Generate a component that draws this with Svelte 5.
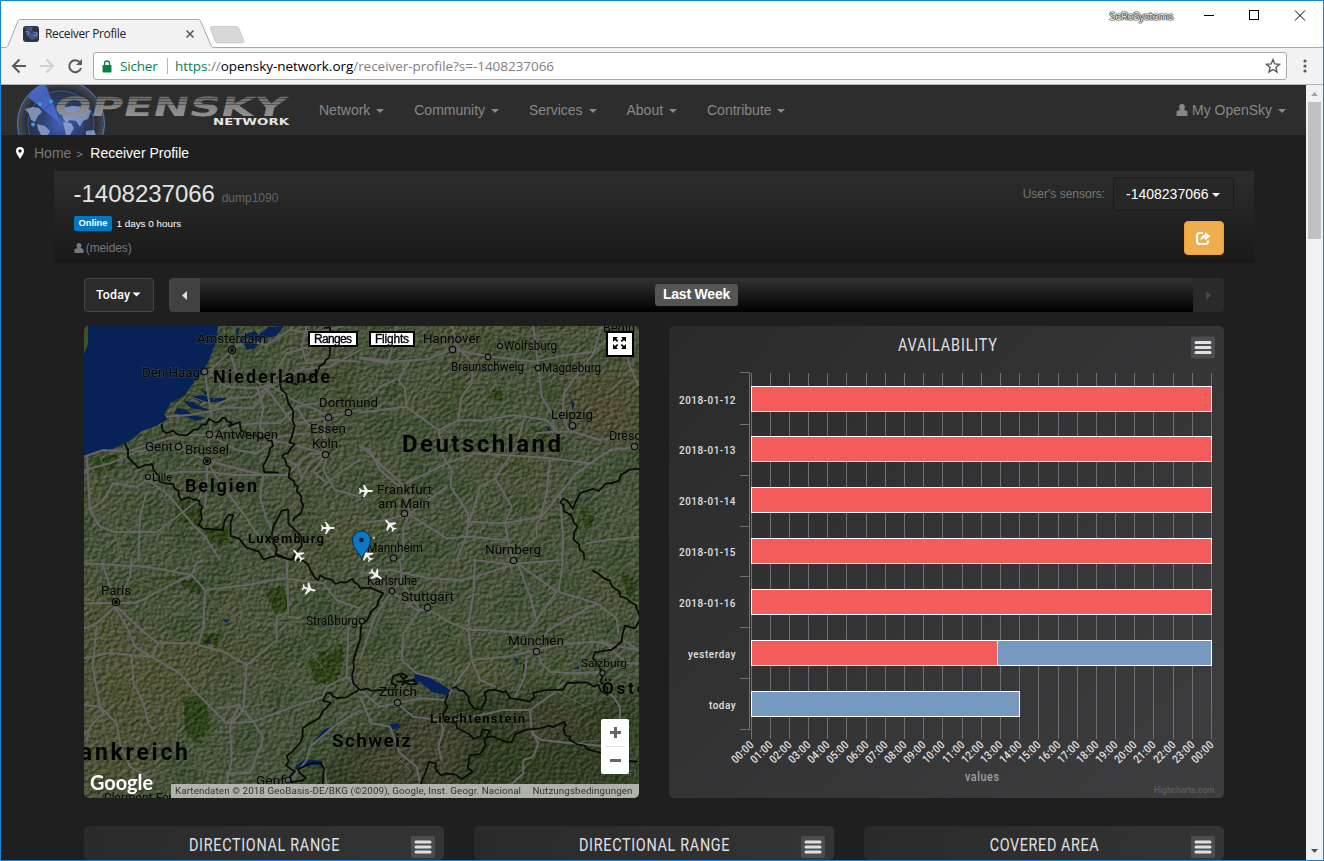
<script>
  const menus = ['Network', 'Community', 'Services', 'About', 'Contribute'];
  const days = [
    { label: '2018-01-12', w: 56, y: 386.5, parts: [[751.5, 1211.5, 0]] },
    { label: '2018-01-13', w: 56, y: 436.5, parts: [[751.5, 1211.5, 0]] },
    { label: '2018-01-14', w: 56, y: 487.5, parts: [[751.5, 1211.5, 0]] },
    { label: '2018-01-15', w: 56, y: 538.5, parts: [[751.5, 1211.5, 0]] },
    { label: '2018-01-16', w: 56, y: 589.5, parts: [[751.5, 1211.5, 0]] },
    { label: 'yesterday', w: 47, y: 640.5, parts: [[751.5, 997.5, 0], [997.5, 1211.5, 1]] },
    { label: 'today', w: 26, y: 691.5, parts: [[751.5, 1019.5, 1]] }
  ];
  const ticks = [372.5, 424.5, 475.5, 526.5, 576.5, 627.5, 678.5, 729.5];
  const hours = Array.from({ length: 25 }, (_, i) => ({
    x: Math.floor(751 + i * 19.19) + 0.5,
    t: String(i % 24).padStart(2, '0') + ':00'
  }));
  const lower = [
    { title: 'DIRECTIONAL RANGE', w: 150 },
    { title: 'DIRECTIONAL RANGE', w: 150 },
    { title: 'COVERED AREA', w: 108.5 }
  ];

  // label, x, y (baseline), width, font size, weight
  const cities = [
    ['Amsterdam', 197, 343, 69, 13, 400], ['Den Haag', 142, 377, 58, 13, 400],
    ['Antwerpen', 215, 439, 63, 12.5, 400], ['Gent', 145, 451, 28, 12.5, 400],
    ['Brüssel', 185, 454, 44, 13, 400], ['Lille', 152, 481, 20, 11.5, 400],
    ['Dortmund', 319, 407, 59, 13, 400], ['Essen', 310, 433, 36, 13, 400],
    ['Köln', 312, 448, 26, 13, 400], ['Hannover', 423, 343, 57, 13, 400],
    ['Wolfsburg', 504, 350, 53, 12, 400], ['Braunschweig', 451, 371, 73, 12, 400],
    ['Magdeburg', 542, 372, 59, 12, 400], ['Berlin', 603, 332, 32, 13, 400],
    ['Leipzig', 551, 419, 42, 13, 400], ['Dresden', 609, 440, 46, 13, 400],
    ['Frankfurt', 377, 494, 55, 13, 400], ['am Main', 378, 508, 52, 13, 400],
    ['Mannheim', 367, 552, 56, 12, 400], ['Nürnberg', 485, 554, 56, 13, 400],
    ['Paris', 101, 595, 30, 13, 400], ['Straßburg', 306, 625, 52, 12, 400],
    ['Karlsruhe', 367, 585, 50, 12, 400], ['Stuttgart', 401, 601, 53, 13, 400],
    ['München', 508, 645, 56, 13, 400], ['Salzburg', 581, 667, 46, 11.5, 400],
    ['Zürich', 379, 696, 38, 13, 400], ['Genf', 256, 785, 29, 12.5, 400],
    ['Clermont-Ferrand', 104, 802, 92, 12, 400], ['Lyon', 216, 802, 28, 12, 400],
    ['Niederlande', 213, 383, 117, 18, 700], ['Belgien', 185, 492, 72, 18, 700],
    ['Luxemburg', 248, 543, 76, 13, 700], ['Deutschland', 402, 452, 159, 24, 700],
    ['Liechtenstein', 430, 723, 95, 13, 700], ['Schweiz', 332, 747, 79, 19, 700],
    ['Frankreich', 54, 760, 134, 23, 700], ['Österreich', 602, 694, 105, 17, 700]
  ];
  const dots = [
    [204.5, 371.5], [209.5, 434.5], [178.5, 446.5], [148, 477, 2.5], [348.5, 412.5], [328.5, 417.5],
    [325.5, 454.5], [452.5, 349.5], [500, 346, 2.5], [488, 357, 2.8], [538, 368, 2.8],
    [572.5, 425.5], [634.5, 446.5], [404.5, 513.5], [393.5, 558], [513.5, 560.5], [362, 621, 2.6],
    [392, 591, 2.8], [427.5, 607.5], [536.5, 651.5], [602.5, 673, 2.6], [397.5, 702.5], [288, 780, 2.8]
  ];
  const capitals = [[232, 350], [207, 461], [116, 602]];
  const planes = [
    [366, 491, 0], [328, 528, 0], [390, 525, -130], [298, 555, -130],
    [309, 589, 15], [376, 575, 35], [367, 555, -125]
  ];

  // Roads, one list per map tile; tile units are thirds of a pixel
  const tiles = [
    {
      x: 80, y: 320,
      main: [
        'M392 150 450 95 500 60 560 75 630 30 700 40 790 18', 'M450 95 470 160 540 190 600 180 660 150 750 140 840 90',
        'M375 160 385 230 395 290 388 345 380 420 382 480 375 560', 'M390 160 440 200 530 205 570 195 640 240 700 265 745 290 840 270',
        'M260 290 330 285 380 275 440 262 520 265 570 200 590 150 620 100 690 80', 'M385 265 450 235 520 230 560 205 600 260 640 310 735 295',
        'M400 345 450 320 520 310 600 310 650 260 730 245', 'M12 410 70 390 140 395 200 375 300 345 388 345 470 390 530 400 600 350 680 340',
        'M12 450 90 430 170 395 280 375 380 420 450 440 550 465 620 465 690 400 740 405', 'M380 420 420 490 490 580 530 640 590 715',
        'M20 410 30 570 60 620 100 635 230 637 290 590 355 540 380 480', 'M30 570 70 540 100 490 170 500 215 470 300 455 380 455 460 465 550 465',
        'M200 515 180 590 175 720', 'M205 480 265 525 340 615 375 650 420 720', 'M735 300 730 350 740 410 730 450 765 510 840 530',
        'M650 260 680 310 735 345 735 400 690 430 665 475 655 440 620 420', 'M550 465 540 530 560 600 590 650 620 690',
        'M740 400 700 455 740 490 790 450 840 420', 'M680 18 665 80 680 130 760 120 840 125', 'M530 200 550 260 540 320 570 360 640 375 735 400'
      ],
      minor: [
        'M12 560 80 600 130 700', 'M60 410 85 470 160 510', 'M300 345 320 400 300 455', 'M450 440 440 500 470 540',
        'M265 525 330 490 400 490', 'M330 230 390 250 460 290', 'M420 160 430 200 400 240', 'M470 160 520 250 580 260',
        'M700 160 760 210 840 190', 'M400 390 480 350 540 420 600 440', 'M120 640 110 720', 'M660 540 700 620 760 670', 'M700 18 740 80 800 70'
      ],
      borders: [
        'M732 24l18-2 2 50-4 40-12 10-4 10-14 7-6 20-20 16-20 8-14 2-8 8-20-5-18-5-12 4 4 22 14 12 8 32 14 20-2 30 6 14-10 38-6 12 16 6-14 16-6 10-10 2-8 8 10 10 4 18 10 6-4 30 16 10 2 12 10 4-4 14 14 16-2 12 8 16-8 24-18 12-6 10',
        'M245 312l2 18 12 10 20-8 14 12 28 2 22-18 12 0 10-14 14 0 8-18 20 12 12-4 8-10 8 0 6 10 14 4-8 12 12-6 20-8 4 28 12 0 12 12 24 0 10 10 14-6 10 12 10 0 4 16-8 6-6 24-8 16-8 14 4 18 44 2',
        'M134 370l10 20 0 22 14 14 18 18 18-8 14-2 8-2 6 20 14 16 0 16 22 6 22 2 4 14 12 6 0 16 8 12 20-8 22 8 12 2 0 12 8 4-4 18 4 20-10 18 14 12 58 4 6-28 12-18 14 2-8 20 0 42 26 8 20 26 24 8 14 4 14 24 22-6 16-4',
        'M625 568l-20 4-12 24-12 20-6 30 4 20 12 20-4 18 12 6 36 10 18-28 12-14 0-26-20-22-20-20 0-42', 'M590 702 620 716 665 720'
      ]
    },
    {
      x: 360, y: 320,
      main: [
        'M0 112 100 125 200 118 278 88 380 108 520 125 620 105 700 95 740 60', 'M150 120 115 180 135 205 138 260 100 265 0 278',
        'M105 180 60 200 35 225', 'M278 18 290 80 340 130 335 190 305 230 295 300 370 302 460 285 560 300 590 335 637 335',
        'M520 18 535 140 545 230 580 290 582 335 530 340', 'M725 18 700 100 640 180 612 220 608 290 625 330', 'M785 45 810 140 835 195',
        'M138 260 180 290 235 330 300 300', 'M235 330 250 410 275 450 272 500 325 580 322 640 290 720', 'M0 375 80 450 130 495 200 460 260 430 340 400 480 408 570 415 690 430 750 390 835 380',
        'M490 300 470 380 405 475 455 560 435 610 320 605', 'M570 415 560 520 540 590 435 610 450 690 460 720',
        'M405 475 360 500 330 600', 'M690 430 650 460 600 520 530 610 530 650 470 700', 'M637 335 720 360 835 340',
        'M130 495 150 580 130 620 130 720', 'M0 610 80 600 150 580 260 500', 'M150 585 260 655 325 650 440 660', 'M600 520 610 670 605 720', 'M680 670 740 660 835 650',
        'M115 0 85 130 0 115', 'M130 510 60 450 30 390 0 380'
      ],
      minor: [
        'M380 110 400 190 490 215', 'M440 420 450 360 500 390', 'M545 150 620 170 700 150', 'M150 120 200 60 180 18',
        'M650 360 680 420 630 480', 'M700 520 760 500 810 525', 'M0 520 60 570 80 610', 'M400 18 500 50 640 35', 'M680 580 750 600 835 580'
      ],
      borders: ['M837 447l-32 2-10 10-12 4-6 20-20 6-20 2-20 22-18-6-38 12-16 30-6 18-18-26-12-4-8 10 10 10 0 16 24 14 6 20 12 12-10 18-2 22 16 14 2 16 12 10 2 20']
    },
    {
      x: 80, y: 560,
      main: [
        'M12 130 170 128 280 70 335 45 375 90 500 75 610 55 730 70 770 120 840 145', 'M12 10 100 15 200 20 335 45 350 10 370 0',
        'M375 90 370 200 355 255 430 275 500 315 490 445 450 500 455 600 440 672', 'M105 140 145 210 165 260 215 290 300 340 350 400 440 490 520 485 550 535 510 640 440 640',
        'M110 140 190 215 235 250 355 250', 'M235 250 215 290 155 285 90 278 12 295', 'M50 200 38 320 60 440 110 490 120 550 150 620 200 650',
        'M105 140 50 190 12 205', 'M155 285 160 370 190 430 205 490 220 510', 'M12 435 60 440 70 460 30 500 20 540', 'M500 315 590 240 590 170 625 155 620 0',
        'M520 485 640 440 730 410 740 380 800 350 805 200 840 145', 'M65 0 80 50 110 125', 'M155 0 150 50 120 120', 'M800 350 838 390', 'M625 170 660 175', 'M415 445 440 442 475 435 520 485', 'M480 435 450 490',
        'M625 670 680 600 690 560 760 500 840 450', 'M730 610 740 672'
      ],
      minor: [
        'M375 90 420 150 540 190 680 185', 'M500 315 625 375 730 380', 'M120 480 200 470', 'M625 375 600 440', 'M12 330 60 320 140 330', 'M640 190 690 270 740 340',
        'M200 650 300 620 440 640', 'M60 440 90 600', 'M150 50 240 90 335 45', 'M690 490 760 450'
      ],
      borders: [
        'M665 0l18 12 8 18 14 24 10 6 6-14 12 8 24 6 10 12 16-6 14 2 20-12 8 12 8 4 7 12',
        'M840 240l-14 40-6 24 2 20-6 22 4 24 18 18-38 24-30 2-12-6-6-10-12 2-12 22 24 6-10 12-14 14-10 20-28 16-22 14 0 26-6 16-26 30-16 12 6 16-8 12 14 10 12 8-14 16 4 16 30-4 14-8-18-14-6-12 38-18 30-2 10 16-4 48'
      ]
    },
    {
      x: 360, y: 560,
      main: [
        'M0 40 90 30 205 55 300 60 345 50 440 20 480 10 610 0', 'M120 0 125 60 90 100 45 170 20 240 0 300', 'M95 95 170 150 210 150 265 185 325 210 380 210 500 220 530 180 510 110 475 15 340 0',
        'M120 60 180 150 130 220 125 300 170 340 250 360', 'M345 0 340 100 325 200 335 300 360 360 405 380', 'M335 300 440 290 530 270 545 310 570 335 640 340 725 335',
        'M530 270 590 255 700 245 835 270', 'M480 15 590 95 530 180', 'M610 0 595 95 710 130 770 175 775 220', 'M710 130 600 190 560 215 530 270', 'M500 290 495 350 465 410',
        'M330 310 280 380 265 410', 'M0 390 60 440 110 430 180 415 260 420', 'M110 430 160 470 240 480 250 510 235 560 245 600', 'M0 410 35 490 90 500 120 580 170 620 180 672',
        'M270 480 340 470 430 450 510 450 580 400 610 370', 'M510 450 515 510 535 550 520 590 490 600 490 640 455 672', 'M730 390 760 410 780 440 780 480', 'M515 520 545 540 640 550 750 560', 'M725 240 800 310 835 310', 'M835 270 790 240'
      ],
      minor: [
        'M230 0 220 60 190 120', 'M210 150 260 220 330 240', 'M45 180 90 250 130 280', 'M265 185 290 120 345 90', 'M40 600 110 590 150 630',
        'M600 400 680 440 730 400', 'M620 550 720 540', 'M380 210 420 280 440 290', 'M60 540 10 560'
      ],
      borders: [
        'M0 85l30-2 40 17-14 20-4 18-18 16-12 26-18 14-4 46', 'M0 390l24-4 10 6 40-2 30-2 4-12-14-8 6-20 26-8 16 10-12 6-8-8 14 16 22-4 14 10-20 4-16-6-10 6 8-8-26-2',
        'M265 402l-10 24 8 16-14 20 4 20 36 8 2 14 36 18 14 14 22-8 4-20 22 4-16 30 4 14-16 26-32 4-6 38 14 10-32 24-18-14-26-4-18 6-16-18 0-18-20-4-10 30-16 38',
        'M275 385l14-4 8 10 14 2 14 16 2 16 14 20 22 4 16-32-6-20 14-6 16-2 26 8 8-4 14 22 32 4 26 6 14-14-4-12 34-8 56-2 12-20 60-2 20 12 14-4 8 18 20 12-2-22-20-18 8-20-14-30-16-20 6-18 50-8 30-24 2-20 8-28 30 8 8-14 8-16-14-40-18-10-10-10-18-6-4-16-20-12-8-20-14-4-20-16-18-10',
        'M370 535l26-6 34 14 24 4 12-24 34-14 40-4 26-8 14 4 32-16 6 10-8 10 6 20 14 6-2 8 24 14 22 4 12 12 22 6 36 8 60 20 30 2'
      ]
    }
  ];
</script>

{#snippet caret()}<span class="caret"></span>{/snippet}

{#snippet person(size)}
  <svg class="person" width={size} height={size} viewBox="0 0 11 12">
    <path d="M5.500 0C3.500 0 2.600 1.200 2.600 3.100c0 1.200.4 2.200 1 2.900L1.600 6.600C.6 7 0 7.600 0 8.600v2.500c0 .6.300.9.900.9h9.200c.6 0 .9-.3.900-.9V8.600c0-1-.6-1.600-1.600-2L7.400 6c.6-.7 1-1.700 1-2.900C8.400 1.200 7.500 0 5.500 0z" fill="currentColor" />
  </svg>
{/snippet}

{#snippet burger(x, y)}
  <rect x={x} y={y} width="24" height="22" rx="2" fill="#4d4d4f" />
  <path d="M{x + 5} {y + 6}h14M{x + 5} {y + 11}h14M{x + 5} {y + 16}h14" stroke="#e0e0e3" stroke-width="3" stroke-linecap="round" />
{/snippet}

{#snippet narrow(x, y, size, w, fill, label, k = 0.8)}
  <text transform="translate({x} {y}) scale({k} 1)" class="cond" class:small={size < 14} font-size={size} {fill} textLength={w / k} lengthAdjust="spacing">{label}</text>
{/snippet}

<div class="window">
  <div class="tabs">
    <svg class="tabshape" width="260" height="47" viewBox="1 1 260 47">
      <path d="M1 47.500H5.500C7 47.500 7.500 46.500 8 45.500L18 21C18.600 19.800 19 19.500 20.500 19.500H198C199.500 19.500 200 20 200.600 21.200L211 45.500C211.600 47 212 47.500 213.500 47.500H261V49H1z" fill="#f2f2f2" stroke="#a9a9a9" />
      <path d="M212 26.500h24c1.500 0 2.200.5 2.800 1.800l4.800 12c.6 1.600.2 2.700-1.500 2.700h-24c-1.500 0-2.200-.5-2.800-1.800l-4.800-12c-.6-1.600-.2-2.700 1.500-2.700z" fill="#d8d8d8" stroke="#c4c4c4" stroke-width=".8" />
      <rect x="23" y="26" width="16" height="16" rx="3" fill="#30343d" />
      <path d="M24.500 28l7.500 5 .5-6-5-.5zM25 31h6l3 3 4-2v5l-6 3-5-4z" fill="#3f5690" />
      <path d="M26 31l3 1-1 3M33 32l4 1-1 3-3-1" stroke="#7489b8" fill="none" />
      <path d="M186.500 30.500l7 7m0-7l-7 7" stroke="#5a5a5a" stroke-width="1.600" />
    </svg>
    <span class="tabtitle">Receiver Profile</span>
    <span class="owner">SeRoSystems</span>
    <svg class="winbtns" width="110" height="26" viewBox="1200 2 110 26" fill="none" stroke="#000">
      <path d="M1204 15.500h10M1295 10.500l10 10m0-10l-10 10" />
      <rect x="1249.500" y="10.500" width="9" height="9" />
    </svg>
  </div>
  <div class="toolbar">
    <svg width="80" height="36" viewBox="4 48 80 36" fill="none" stroke-width="2">
      <path d="M26 66H13m6.500-6.500L13 66l6.500 6.500" stroke="#5a5a5a" />
      <path d="M40 66h13m-6.500-6.500L53 66l-6.500 6.500" stroke="#d0d0d0" />
      <path d="M80 62.500A6 6 0 1 0 81 68" stroke="#5a5a5a" /><path d="M82 59v6h-6z" fill="#5a5a5a" />
    </svg>
    <div class="omnibox">
      <svg width="10" height="13" viewBox="0 0 10 13"><rect x=".5" y="5" width="9" height="7.500" rx="1" fill="#0b8043" /><path d="M2.500 5.500V3.500a2.500 2.500 0 0 1 5 0v2" fill="none" stroke="#0b8043" stroke-width="1.300" /></svg>
      <span class="secure">Sicher</span><span class="sep"></span>
      <span class="url"><i class="g">https</i><i class="s">://</i><i class="k">opensky-network.org</i><i class="s">/receiver-profile?s=-1408237066</i></span>
      <svg class="star" width="16" height="16" viewBox="0 0 16 16"><path d="M8 1.500l1.800 4.400 4.700.4-3.600 3.100 1.100 4.600L8 11.500 4 14l1.100-4.600L1.500 6.300l4.700-.4z" fill="none" stroke="#5a5a5a" stroke-width="1.400" /></svg>
    </div>
    <svg class="dots" width="4" height="14" viewBox="0 0 4 14" fill="#5a5a5a"><circle cx="2" cy="2" r="1.600" /><circle cx="2" cy="7" r="1.600" /><circle cx="2" cy="12" r="1.600" /></svg>
  </div>

  <div class="viewport">
    <main>
      <nav>
        <svg class="logo" width="282" height="50" viewBox="12 85 282 50">
          <defs>
            <radialGradient id="globe"><stop offset="0" stop-color="#4562bf" /><stop offset=".45" stop-color="#2f3f70" /><stop offset=".8" stop-color="#2a303b" /><stop offset="1" stop-color="#484b50" /></radialGradient>
            <linearGradient id="silver" x1="0" y1="0" x2="0" y2="1"><stop offset="0" stop-color="#5a5a5a" /><stop offset=".5" stop-color="#858585" /><stop offset="1" stop-color="#9a9a9a" /></linearGradient>
          </defs>
          <circle cx="61" cy="123.500" r="43.500" fill="url(#globe)" stroke="#4d7fc8" />
          <path d="M61 124L28 97Q35 86 45 83z" fill="#4b6bd0" opacity=".85" />
          <circle cx="61" cy="124" r="33" fill="none" stroke="#3a62aa" stroke-width=".8" />
          <circle cx="61" cy="124" r="22" fill="none" stroke="#2e4f90" stroke-width=".8" />
          <path d="M25 109l8-2 6 1 3 4-4 4-3 6-4-2-2-6zM37 124l8 2 5 5-2 4h-7l-3-6zM62 108l10-2 14 1 5 4-3 8-5 2-3 6-4-6-6-1-4 3-3-5zM63 122l8 1 3 5-4 7h-4zM86 131l8-1 2 5H86z" fill="#a3b4de" opacity=".7" />
          <circle cx="40" cy="104" r="2" fill="#3d97e8" /><circle cx="51" cy="101.500" r="2" fill="#3d97e8" /><circle cx="33" cy="124.500" r="2" fill="#3d97e8" />
          <g transform="skewX(-13)">
            <text x="79" y="116" class="logotext" font-size="26.500" textLength="232" lengthAdjust="spacingAndGlyphs" fill="url(#silver)">OPENSKY</text>
          </g>
          <path d="M56 98.500h233M56 101.500h233M56 104.500h233" stroke="#2d2d2d" stroke-width=".8" opacity=".6" />
          <text x="213" y="125" class="logotext" font-size="9.500" textLength="76" lengthAdjust="spacingAndGlyphs" fill="#e6e6e6">NETWORK</text>
        </svg>
        {#each menus as m}<a>{m} {@render caret()}</a>{/each}
        <a class="me">{@render person(12)} My OpenSky {@render caret()}</a>
      </nav>

      <div class="crumbs">
        <svg width="8" height="12" viewBox="0 0 8 12"><path d="M4 0a4 4 0 0 0-4 4c0 1.500.6 2.300 1.200 3.500L4 12l2.800-4.500C7.400 6.300 8 5.500 8 4a4 4 0 0 0-4-4zm0 2.300a1.700 1.700 0 1 1 0 3.400 1.700 1.700 0 0 1 0-3.400z" fill="#fff" fill-rule="evenodd" /></svg>
        <span class="home">Home</span><span class="gt">&gt;</span><span class="here">Receiver Profile</span>
      </div>

      <section class="sensor">
        <div class="left">
          <h1>-1408237066 <small>dump1090</small></h1>
          <p class="status"><b>Online</b><span>1 days 0 hours</span></p>
          <p class="user">{@render person(10)} (meides)</p>
        </div>
        <div class="right">
          <div class="pick"><span>User's sensors:</span><button>-1408237066{@render caret()}</button></div>
          <button class="share">
            <svg width="16" height="15" viewBox="0 0 16 15"><path d="M8 2H4.500A2.500 2.500 0 0 0 2 4.500v6A2.500 2.500 0 0 0 4.500 13h6a2.500 2.500 0 0 0 2.500-2.500V9.500" fill="none" stroke="#fff" stroke-width="2.200" /><path d="M10 1l5.500 4.200L10 9.500V7.200C7.800 7.200 6.300 8 5.300 9.700 5.500 6.500 7.200 3.700 10 3.500z" fill="#fff" /></svg>
          </button>
        </div>
      </section>

      <div class="content">
        <div class="range">
          <button class="today">
            <svg width="45" height="16" viewBox="0 0 45 16">{@render narrow(0, 12, 13, 34, '#fff', 'Today', 0.95)}<path d="M36.500 5.500h8l-4 4z" fill="#fff" /></svg>
          </button>
          <div class="bar">
            <span class="step"><svg width="5" height="9" viewBox="0 0 5 9"><path d="M5 0v9L0 4.500z" fill="#e0e0e0" /></svg></span>
            <span class="track"><b>Last Week</b></span>
            <span class="step off"><svg width="5" height="9" viewBox="0 0 5 9"><path d="M0 0v9l5-4.500z" fill="#484848" /></svg></span>
          </div>
        </div>

        <div class="pair">
          <div class="map">
            <svg width="555" height="472" viewBox="84 326 555 472">
              <defs>
                <filter id="relief" x="0" y="0" width="100%" height="100%" color-interpolation-filters="sRGB">
                  <feTurbulence type="fractalNoise" baseFrequency=".24 .28" numOctaves="3" seed="8" />
                  <feDiffuseLighting surfaceScale="2" diffuseConstant="1.050" lighting-color="#fff"><feDistantLight azimuth="225" elevation="32" /></feDiffuseLighting>
                </filter>
                <filter id="patches" x="0" y="0" width="100%" height="100%" color-interpolation-filters="sRGB">
                  <feTurbulence type="fractalNoise" baseFrequency=".03" numOctaves="5" seed="21" />
                  <feColorMatrix values="0 0 0 0 .17 0 0 0 0 .27 0 0 0 0 .12 5 0 0 0 -2.400" />
                </filter>
                <filter id="fields" x="0" y="0" width="100%" height="100%" color-interpolation-filters="sRGB">
                  <feTurbulence type="fractalNoise" baseFrequency=".014" numOctaves="4" seed="5" />
                  <feColorMatrix values="0 0 0 0 .34 0 0 0 0 .32 0 0 0 0 .2 0 5 0 0 -2.600" />
                </filter>
                <filter id="soft"><feGaussianBlur stdDeviation="9" /></filter>
                <filter id="edge"><feTurbulence baseFrequency=".12" numOctaves="3" /><feDisplacementMap in="SourceGraphic" scale="9" /></filter>
              </defs>
              <rect x="84" y="326" width="555" height="472" fill="#46523a" />
              <rect x="84" y="326" width="555" height="472" filter="url(#fields)" opacity=".3" />
              <rect x="84" y="326" width="555" height="472" filter="url(#patches)" opacity=".35" />
              <g filter="url(#soft)">
                <path d="M639 690L580 700 480 690 420 700 350 740 290 798H639z" fill="#27351d" opacity=".75" />
                <path d="M84 590l40 30 60 20 60 0-60 70-50 80-50 0z" fill="#54502f" opacity=".5" />
                <path d="M340 770l60-40 30-20 40 20-20 60zM500 720l60-10 40 10-60 20z" fill="#574838" opacity=".5" />
                <path d="M560 370h60l20 30-10 50-50-20z" fill="#524a2e" opacity=".6" />
              </g>
              <g fill="#293e13" filter="url(#edge)" opacity=".9">
                <path d="M171 500l25-4 3 30-25-8zM202 526l22-4 6 18-20 4zM178 578l22-2 2 16-20-4zM262 588l20-6 6 28-14 4zM200 630l20 2-2 12-18 0zM180 696l22-2 6 20-8 28-16-8zM306 660l36-18-4 40-26-2zM485 395l14-10 2 14zM528 425l18 4-4 10zM580 512l12-4 0 14-8 6zM90 455l26-2-4 12-20 8zM620 570l14 8 0 22-10-8z" />
              </g>
              <rect x="84" y="326" width="555" height="472" filter="url(#relief)" style="mix-blend-mode:soft-light" opacity=".45" />
              <g fill="#062257">
                <path d="M84 326h134l-2 16-7 18-6 12-10 11-8 12-14 8-7 11 4 5-12 7-14 5-11 9-18 9-22 5-8 4z" />
                <path d="M239 343l7-9 9-3 4 4 9-8 16-1-8 10-15 3-6 9-8 2-3-6zM190 397l13-2 8 3 14 0 4 2-14 2-14 0zM183 401l10 1 10 6 16 2-12 1-16-3zM177 408l8 1 8 6 13 3-10 3-12-5-10-3zM200 389l10 4-5 2zM236 329l4-2-3 12z" />
                <path d="M416 673l14 5 14 8 8 5-6 4-14-3-12-10-8-1zM296 765l10-6 16 2 3 5-14-1-12 4-4 0zM313 741l12-12 5-2-7 9zM332 726l4-5-2 5zM398 705l8 4 8 4-8-1-8-5zM388 725l10-2 3 5-8 1zM514 657l4 2-1 6zM523 662l2 5-2 5zM573 669l6-3 0 3zM222 619l8 1-4 3zM204 642l7-5-2 5zM571 399l4 5-3 6zM546 426l6 4-4 1z" />
              </g>
              <path d="M84 326h4l0 18-4 10z" fill="#425022" />
              {#each tiles as t}
                <g transform="translate({t.x} {t.y}) scale(.33333)" fill="none" stroke-linejoin="round" stroke-linecap="round">
                  <path d={t.minor.join('')} stroke="#5c5e55" stroke-width="3" />
                  <path d={t.main.join('')} stroke="#686566" stroke-width="6" />
                </g>
              {/each}
              {#each tiles as t}
                <path transform="translate({t.x} {t.y}) scale(.33333)" d={t.borders.join('')} fill="none" stroke="#090b08" stroke-width="5.500" stroke-linejoin="round" />
              {/each}
              {#each dots as [x, y, r]}<circle cx={x} cy={y} r={r || 3.200} fill="#5d605b" stroke="#0b0c0b" stroke-width="1.200" />{/each}
              {#each capitals as [x, y]}<circle cx={x} cy={y} r="3.700" fill="#484c43" stroke="#080808" stroke-width="1.300" /><circle cx={x} cy={y} r="1.900" fill="#080808" />{/each}
              {#each cities as [label, x, y, w, size, weight]}
                <text {x} {y} textLength={w} font-size={size} font-weight={weight} lengthAdjust={weight === 700 ? 'spacing' : 'spacingAndGlyphs'} class="city">{label}</text>
              {/each}
              {#each planes as [x, y, r]}
                <path transform="translate({x} {y}) rotate({r})" d="M7 0C7-.8 5.500-1 4.500-1H2L-1.500-6H-3L-1.500-1H-4.500L-6-3H-7L-6.200 0-7 3H-6L-4.500 1H-1.500L-3 6H-1.500L2 1H4.500C5.500 1 7 .8 7 0z" fill="#f1f1f1" />
              {/each}
              <path d="M373 533l1 4-2 1 3 1z" fill="#f1f1f1" />
              <path d="M361.500 559.500c-.5-6-9-10-9-19.500a9 9 0 0 1 18 0c0 9.500-8.500 13.500-9 19.500z" fill="#0a78c4" stroke="#082c48" /><circle cx="361.500" cy="540" r="2.200" fill="#06121c" />
              <text x="90" y="790" font-family="Lato" font-size="20" font-weight="700" fill="#fff" textLength="63" lengthAdjust="spacingAndGlyphs">Google</text>
              <rect x="171" y="784" width="468" height="14" fill="#bfc2bc" opacity=".88" />
              <text x="175" y="794" class="credit" textLength="346">Kartendaten © 2018 GeoBasis-DE/BKG (©2009), Google, Inst. Geogr. Nacional</text>
              <text x="532.500" y="794" class="credit" textLength="100">Nutzungsbedingungen</text>
              <g fill="#fff" stroke="#000" stroke-width="2"><rect x="309" y="332" width="48" height="14" /><rect x="370" y="332" width="44" height="14" /><rect x="607" y="332" width="26" height="24" /></g>
              <text x="314" y="343" class="tag" textLength="38">Ranges</text><text x="375" y="343" class="tag" textLength="34">Flights</text>
              <path d="M613 337h5l-1.700 1.700 2 2-1.300 1.300-2-2-2 2zM626 337h-5l1.700 1.700-2 2 1.300 1.300 2-2 2 2zM613 349h5l-1.700-1.700 2-2-1.300-1.300-2 2-2-2zM626 349h-5l1.700-1.700-2-2 1.300-1.300 2 2 2-2z" fill="#000" />
              <rect x="601" y="719" width="28" height="55" rx="2" fill="#fff" /><path d="M606 746.500h18" stroke="#e2e2e2" />
              <path d="M610 732.500h11M615.500 727v11M610 760.500h11" stroke="#666" stroke-width="3" />
            </svg>
          </div>

          <div class="chart">
            <svg width="555" height="472" viewBox="669 326 555 472">
              {@render narrow(898, 351, 18, 99, '#e0e0e3', 'AVAILABILITY')}
              {@render burger(1191, 336.5)}
              <path d={hours.map((h) => `M${h.x} 373V739`).join('')} stroke="#707073" />
              <path d={'M749.500 372V730' + ticks.map((y) => `M740 ${y}H749`).join('')} stroke="#707073" />
              {#each days as d}
                {@render narrow(735 - d.w, d.y + 17, 11, d.w + 0.5, '#e0e0e3', d.label, 0.9)}
                {#each d.parts as [a, b, k]}<rect x={a} y={d.y} width={b - a} height="25" fill={k ? '#7798bf' : '#f45b5b'} stroke="#fff" />{/each}
              {/each}
              {#each hours as h}
                <g transform="translate({h.x + 2.500} 746) rotate(-45)">{@render narrow(-25.5, 0, 11.5, 26, '#e0e0e3', h.t, 0.85)}</g>
              {/each}
              {@render narrow(965, 781, 12, 34, '#a0a0a3', 'values', 0.9)}
              {@render narrow(1154, 793, 9.5, 60.5, '#5e5e5f', 'Highcharts.com', 0.9)}
            </svg>
          </div>
        </div>

        <div class="lower">
          {#each lower as c}
            <div class="chart">
              <svg width="360" height="40" viewBox="0 0 360 40">
                {@render narrow(180 - c.w / 2, 25, 18, c.w + 0.5, '#e0e0e3', c.title)}
                {@render burger(327, 10)}
              </svg>
            </div>
          {/each}
        </div>
      </div>
    </main>
    <aside>
      <svg width="17" height="17" viewBox="0 0 17 17"><path d="M5 11l3.500-4L12 11z" fill="#a3a3a3" /></svg>
      <div class="thumb"></div>
      <svg width="17" height="17" viewBox="0 0 17 17"><path d="M5 6l3.500 4L12 6z" fill="#505050" /></svg>
    </aside>
  </div>
</div>

<style>
  :global(body) { margin: 0; overflow: hidden; }
  .window { box-sizing: border-box; width: 1324px; height: 861px; border: 1px solid #1883d7; background: #fff; overflow: hidden; display: flex; flex-direction: column; font-family: "Liberation Sans", Arial, sans-serif; font-size: 14px; }
  svg { display: block; flex: none; }
  .tabs { height: 46px; flex: none; display: flex; position: relative; border-bottom: 1px solid #a9a9a9; }
  .tabshape { margin-bottom: -1px; position: relative; z-index: 1; }
  .tabtitle { position: absolute; z-index: 2; left: 44px; top: 24px; font: 12px/17px "Open Sans", sans-serif; letter-spacing: -.36px; color: #222; }
  .owner { margin-left: auto; margin-top: 7px; font: 11px/15px "Open Sans", sans-serif; letter-spacing: -.4px; color: #fff; text-shadow: 0 0 1px #000, 0 0 1px #000, 0 0 1px #222, 0 0 2px #333; }
  .winbtns { margin: 1px 13px 0 27px; }
  .toolbar { height: 36px; flex: none; background: #f2f2f2; border-bottom: 1px solid #b2b2b2; display: flex; align-items: center; padding-left: 3px; }
  .omnibox { box-sizing: border-box; width: 1194px; height: 28px; margin-left: 9px; border: 1px solid #a9a9a9; border-radius: 3px; background: #fff; display: flex; align-items: center; padding: 0 5px 0 8px; font: 14px/24px "Open Sans", sans-serif; white-space: nowrap; }
  .secure { color: #0b8043; margin-left: 8px; width: 47px; letter-spacing: -.2px; font-size: 13.5px; }
  .sep { width: 1px; height: 16px; background: #b5b5b5; margin-right: 7px; }
  .url { letter-spacing: -.04px; font-size: 13.5px; }
  .url i { font-style: normal; }
  .g { color: #0b8043; } .s { color: #808080; } .k { color: #000; }
  .star { margin-left: auto; }
  .dots { margin-left: 16px; }
  .viewport { flex: 1; min-height: 0; display: flex; }
  main { width: 1305px; background: #1f1f1f; overflow: hidden; }
  aside { width: 17px; background: #f1f1f1; display: flex; flex-direction: column; }
  .thumb { width: 13px; height: 137px; margin: 0 2px auto; background: #c1c1c1; }
  nav { height: 50px; background: #2d2d2d; display: flex; align-items: center; color: #888; }
  .logo { margin: 0 10px 0 11px; }
  nav a { padding: 0 15px; white-space: nowrap; }
  .me { margin-left: auto; margin-right: 5px; }
  .person { display: inline-block; vertical-align: -1px; }
  .caret { display: inline-block; width: 0; height: 0; margin-left: 2px; vertical-align: middle; border-top: 4px solid; border-left: 4px solid transparent; border-right: 4px solid transparent; }
  .crumbs { height: 36px; display: flex; align-items: center; padding-left: 15px; }
  .home { margin-left: 10px; color: #777; }
  .gt { margin: 2px 7.5px 0 5px; font-size: 11px; color: #888; }
  .here { color: #fff; }
  .sensor { box-sizing: border-box; width: 1200px; height: 92px; margin-left: 53px; padding: 7px 20px 0 19.500px; display: flex; justify-content: space-between; background: linear-gradient(#2d2d2d, #191919); }
  h1 { margin: 0; font-size: 24px; line-height: 32px; font-weight: 400; color: #e4e4e4; }
  h1 small { font-size: 12px; color: #666; }
  p { margin: 0; }
  .status { height: 15px; margin-top: 2px; display: flex; align-items: center; gap: 4px; font-size: 9.900px; color: #fff; }
  .status b { height: 15px; line-height: 14px; padding: 0 5px; background: #0077c0; border-radius: 2px; font-size: 9.300px; }
  .user { margin-top: 10px; font-size: 12px; line-height: 14px; color: #777; letter-spacing: -.1px; }
  .user .person { margin-right: -1px; }
  .right { display: flex; flex-direction: column; align-items: flex-end; margin-top: -1px; }
  .pick { display: flex; align-items: center; gap: 8px; color: #777; font-size: 12px; }
  button { box-sizing: border-box; height: 34px; font: 14px/20px "Liberation Sans", sans-serif; color: #fff; background: #272727; border: 1px solid #1b1b1b; border-radius: 4px; padding: 0 12px; white-space: nowrap; }
  .pick button { width: 121px; text-align: left; padding-left: 12px; }
  .pick .caret { margin-left: 3px; }
  .share { width: 40px; margin: 10px 10px 0 0; background: #f0ad4e; border-color: #eea236; padding: 0 10px; }
  .content { padding: 15px 0 0 83px; width: 1140px; }
  .range { display: flex; gap: 15px; }
  .today { width: 70px; border-color: #464646; background: #2b2b2b; padding: 0 11px; }
  .bar { flex: 1; height: 34px; display: flex; border-radius: 4px; overflow: hidden; }
  .step { width: 31px; display: grid; place-items: center; background: #414141; }
  .off { background: #2a2a2a; }
  .track { flex: 1; display: flex; justify-content: center; align-items: center; background: linear-gradient(#323232, #000); }
  .track b { color: #fff; background: #555; border-radius: 3px; padding: 0 8px; height: 22px; line-height: 21px; margin-bottom: 1px; letter-spacing: -.2px; }
  .pair, .lower { display: flex; gap: 30px; margin-top: 14px; }
  .lower { margin-top: 28px; }
  .map, .chart { border-radius: 5px; overflow: hidden; }
  .chart { background: linear-gradient(135deg, #2a2a2b, #3e3e40); }
  .lower .chart { height: 34px; background: linear-gradient(100deg, #2a2a2b, #343435); }
  .cond { font-family: Roboto, sans-serif; }
  .small { font-weight: 500; }
  .logotext { font-family: "DejaVu Sans", sans-serif; font-weight: 700; }
  .city { font-family: Roboto, sans-serif; fill: #040404; stroke: #4c5344; stroke-opacity: .55; stroke-width: 1.500px; paint-order: stroke; }
  .credit { font: 9.800px Roboto, sans-serif; fill: #333; }
  .tag { font: 12px "Liberation Sans", sans-serif; fill: #000; stroke: #000; stroke-width: .35px; }
</style>
